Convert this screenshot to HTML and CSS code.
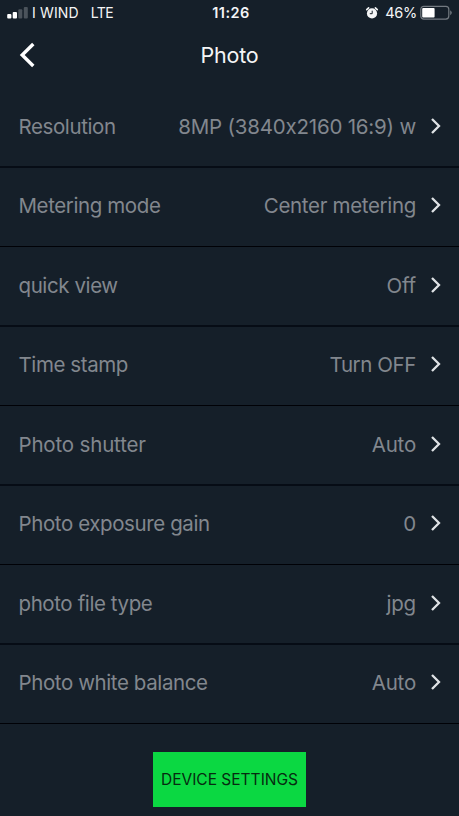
FILE: index.html
```html
<!DOCTYPE html>
<html lang="en">
<head>
<meta charset="utf-8">
<title>Photo</title>
<link rel="stylesheet" href="styles.css">
</head>
<body>
<header class="status">
  <div class="carrier">
    <svg class="signal" width="22" height="14" viewBox="0 0 22 14"><rect x="0.2" y="8" width="4.2" height="4.5" rx="1" fill="#fff"/><rect x="5.7" y="6" width="4.3" height="6.5" rx="1" fill="#fff"/><rect x="11.3" y="3.2" width="4" height="9.3" rx="1" fill="#4b535b"/><rect x="16.8" y="1" width="4" height="11.5" rx="1" fill="#4b535b"/></svg>
    <span class="name">I WIND</span><span class="net">LTE</span>
  </div>
  <div class="clock">11:26</div>
  <div class="power">
    <svg class="alarm" width="14" height="14" viewBox="0 0 14 14"><circle cx="7" cy="7.4" r="5.1" fill="#f4f5f6"/><path d="M1.7 3.6 3.6 1.9M12.3 3.6 10.4 1.9" stroke="#f4f5f6" stroke-width="1.6" stroke-linecap="round"/><path d="M7.2 4.7v3H4.8" fill="none" stroke="#151e28" stroke-width="1"/></svg>
    <span class="percent">46%</span>
    <svg class="battery" width="33" height="16" viewBox="0 0 33 16"><rect x="0.8" y="1.3" width="28" height="12.8" rx="3" fill="none" stroke="#737a81" stroke-width="1.2"/><rect x="2.2" y="2.9" width="12.4" height="9.6" rx="1" fill="#fff"/><path d="M30.2 5.2q3.2 2.5 0 5z" fill="#737a81"/></svg>
  </div>
</header>
<nav class="bar">
  <svg class="back" width="18" height="28" viewBox="0 0 18 28"><path d="M14.3 3 3.2 14 14.3 25" fill="none" stroke="#fff" stroke-width="3.4"/></svg>
  <h1>Photo</h1>
</nav>
<main class="list">
  <div class="row"><span class="label">Resolution</span><span class="value resolution">8MP (3840x2160 16:9) w</span><svg class="chev" viewBox="0 0 12 18"><path d="M2 2 9 9 2 16"/></svg></div>
  <div class="row"><span class="label">Metering mode</span><span class="value metering">Center metering</span><svg class="chev" viewBox="0 0 12 18"><path d="M2 2 9 9 2 16"/></svg></div>
  <div class="row"><span class="label">quick view</span><span class="value">Off</span><svg class="chev" viewBox="0 0 12 18"><path d="M2 2 9 9 2 16"/></svg></div>
  <div class="row"><span class="label">Time stamp</span><span class="value stamp">Turn OFF</span><svg class="chev" viewBox="0 0 12 18"><path d="M2 2 9 9 2 16"/></svg></div>
  <div class="row"><span class="label shutter">Photo shutter</span><span class="value">Auto</span><svg class="chev" viewBox="0 0 12 18"><path d="M2 2 9 9 2 16"/></svg></div>
  <div class="row"><span class="label">Photo exposure gain</span><span class="value">0</span><svg class="chev" viewBox="0 0 12 18"><path d="M2 2 9 9 2 16"/></svg></div>
  <div class="row"><span class="label">photo file type</span><span class="value">jpg</span><svg class="chev" viewBox="0 0 12 18"><path d="M2 2 9 9 2 16"/></svg></div>
  <div class="row"><span class="label">Photo white balance</span><span class="value">Auto</span><svg class="chev" viewBox="0 0 12 18"><path d="M2 2 9 9 2 16"/></svg></div>
</main>
<footer class="foot"><button class="device" type="button">DEVICE SETTINGS</button></footer>
</body>
</html>
```
FILE: styles.css
```css
* { box-sizing: border-box; }
body {
  margin: 0;
  width: 459px;
  height: 816px;
  overflow: hidden;
  background: #151f29;
  color: #f4f5f6;
  font-family: Inter, "Liberation Sans", sans-serif;
  font-feature-settings: "calt" 0;
  white-space: nowrap;
}
svg { display: block; flex: none; }
.status {
  display: grid;
  grid-template-columns: 1fr auto 1fr;
  align-items: center;
  height: 25px;
  padding: 0 6px 0 7px;
  font-size: 14px;
}
.carrier, .power { display: flex; align-items: center; }
.name { margin-left: 3px; letter-spacing: 0.15px; }
.net { margin-left: 12px; letter-spacing: -0.6px; }
.clock { font-weight: 600; font-size: 14.5px; letter-spacing: 0.5px; padding-left: 2px; }
.power { justify-content: flex-end; }
.percent { margin: 0 3px 0 6px; font-size: 14.5px; letter-spacing: -0.3px; }
.bar {
  display: grid;
  grid-template-columns: 60px 1fr 60px;
  align-items: center;
  height: 62px;
  padding-bottom: 2px;
}
.back { margin-left: 19px; }
h1 { margin: 0; font-size: 21.5px; font-weight: 400; letter-spacing: -0.2px; text-align: center; }
.list { display: grid; grid-template-rows: 81px 79px repeat(3, 80px 79px); }
.row {
  display: flex;
  align-items: center;
  padding: 0 17px 1px 18.5px;
  border-bottom: 2px solid #060c15;
  color: #82878e;
  font-size: 20.5px;
}
.row:nth-child(even) { border-bottom: 1px solid #000106; padding-bottom: 4px; }
.label { letter-spacing: -0.4px; }
.shutter { letter-spacing: -0.17px; }
.value { margin-left: auto; letter-spacing: -0.2px; }
.metering { letter-spacing: -0.32px; }
.stamp { letter-spacing: -0.4px; }
.chev { width: 12px; height: 18px; margin: 0 0 1px 14px; fill: none; stroke: #dfe2e5; stroke-width: 2.3; }
.foot { display: flex; justify-content: center; padding-top: 28px; }
.device {
  width: 153px;
  height: 55px;
  border: 0;
  padding: 0;
  background: #0bd842;
  color: #062b10;
  font: 15.5px Inter, "Liberation Sans", sans-serif;
}
```
